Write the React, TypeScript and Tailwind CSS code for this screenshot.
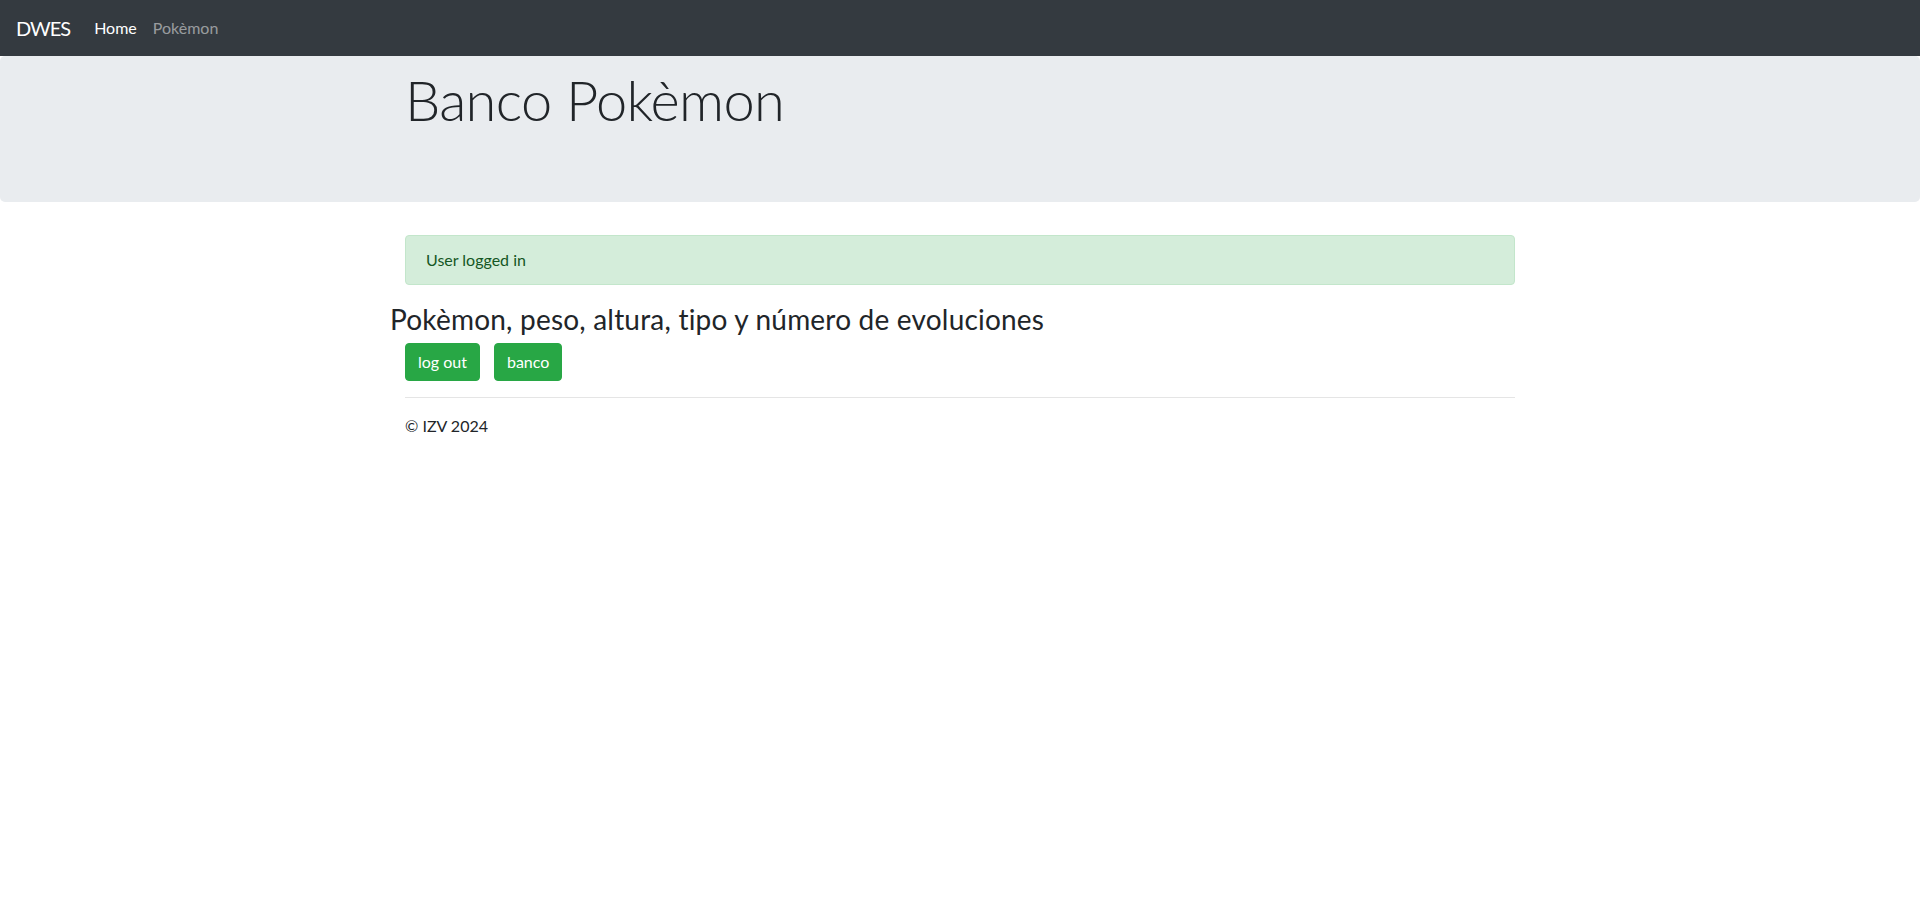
import React from 'react'

export default function App() {
  return (
    <div className="min-h-[919px] bg-white text-[#212529] font-['Lato','Open_Sans',sans-serif]">
      {/* navbar */}
      <nav className="h-14 bg-[#343a40] flex items-center px-4">
        <span className="text-[20px] text-white mr-4 leading-[30px] tracking-[-1px]">DWES</span>
        <a className="px-2 text-base text-white leading-6">Home</a>
        <a className="px-2 text-base text-white/50 leading-6">Pokèmon</a>
      </nav>

      {/* jumbotron */}
      <div className="h-[146px] bg-[#e9ecef] rounded-[5px] pt-[10px]">
        <div className="w-[1140px] mx-auto px-[15px]">
          <h1 className="text-[56px] font-light leading-[1.2] tracking-[-0.7px]">Banco Pokèmon</h1>
        </div>
      </div>

      <main className="w-[1140px] mx-auto">
        <div className="px-[15px] pt-[33px]">
          <div className="bg-[#d4edda] border border-[#c3e6cb] text-[#155724] rounded px-5 py-3 text-base leading-6">
            User logged in
          </div>
        </div>

        <h3 className="mt-[18px] text-[28px] leading-[1.2] font-normal mb-[6px] tracking-[0.2px]">
          Pokèmon, peso, altura, tipo y número de evoluciones
        </h3>

        <div className="px-[15px]">
          <div className="flex gap-[14px]">
            <button className="bg-[#28a745] border border-[#28a745] text-white rounded px-3 py-1.5 text-base leading-6">log out</button>
            <button className="bg-[#28a745] border border-[#28a745] text-white rounded px-3 py-1.5 text-base leading-6">banco</button>
          </div>
          <hr className="my-4 border-t border-black/10" />
          <footer>
            <p className="text-base leading-6">© IZV 2024</p>
          </footer>
        </div>
      </main>
    </div>
  )
}
